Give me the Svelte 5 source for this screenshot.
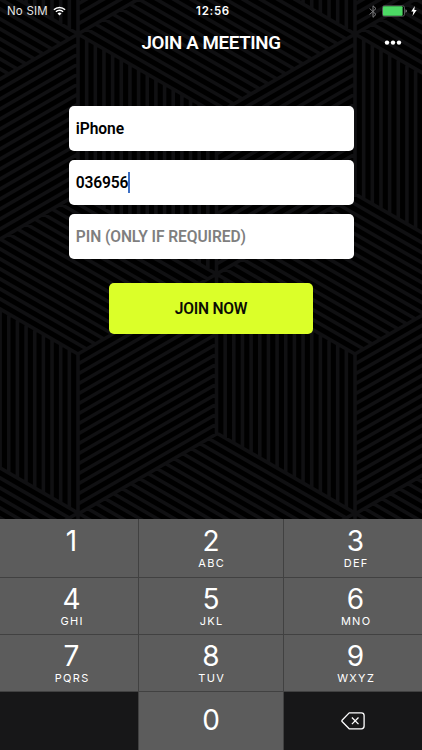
<script lang="ts">
    interface Key {
        digit: string;
        letters?: string;
    }

    let name = $state('iPhone');
    let meetingId = $state('036956');
    let pin = $state('');

    const keys: Key[] = [
        { digit: '1' },
        { digit: '2', letters: 'ABC' },
        { digit: '3', letters: 'DEF' },
        { digit: '4', letters: 'GHI' },
        { digit: '5', letters: 'JKL' },
        { digit: '6', letters: 'MNO' },
        { digit: '7', letters: 'PQRS' },
        { digit: '8', letters: 'TUV' },
        { digit: '9', letters: 'WXYZ' }
    ];

    // striped rhombus backdrop: every hub owns three rhombi
    const W = 138.5;
    const H = 80;
    const STRIPES = 16;
    const hubs = [
        [78, -446], [355, -446],
        [-60.5, -206], [216.5, -206], [493.5, -206],
        [-199, 34], [78, 34], [355, 34],
        [-60.5, 274], [216.5, 274], [493.5, 274],
        [-199, 513], [78, 513], [355, 513], [632, 513]
    ];

    // [stripe direction, step direction]
    const rhombi = [
        [[0, 2 * H], [W, H]],
        [[W, H], [W, -H]],
        [[-W, H], [0, 2 * H]]
    ];

    function buildPath() {
        let d = '';
        for (const [x, y] of hubs) {
            for (const [dir, step] of rhombi) {
                for (let i = 0; i <= STRIPES; i++) {
                    const t = i / STRIPES;
                    d += `M${x + step[0] * t} ${y + step[1] * t}l${dir[0]} ${dir[1]}`;
                }
            }
        }
        return d;
    }

    const stripes = buildPath();

    function press(digit: string) {
        meetingId += digit;
    }

    function erase() {
        meetingId = meetingId.slice(0, -1);
    }
</script>

<div class="screen">
    <svg class="backdrop" viewBox="0 0 422 520" aria-hidden="true">
        <path d={stripes} />
    </svg>

    <div class="status-bar">
        <div class="carrier">
            <span>No SIM</span>
            <svg width="13" height="10" viewBox="0 0 13 10">
                <path d="M0.9 3.7a8 8 0 0 1 11.2 0M2.9 5.8a5.1 5.1 0 0 1 7.2 0" fill="none" stroke="#fff" stroke-width="1.5" />
                <path d="M6.5 9.6L4.5 7.5a2.8 2.8 0 0 1 4 0z" fill="#fff" />
            </svg>
        </div>
        <div class="clock">12:56</div>
        <div class="indicators">
            <svg width="8" height="13" viewBox="0 0 8 13">
                <path d="M0.6 3.5l6.4 5.9-3 2.9V0.8l3 2.8-6.4 5.8" fill="none" stroke="#7d7d7f" stroke-width="1" />
            </svg>
            <svg width="26" height="12" viewBox="0 0 26 12">
                <rect x="0.5" y="0.8" width="22" height="10.4" rx="1.8" fill="#000" stroke="#77777a" stroke-width="0.7" />
                <rect x="1" y="1.3" width="19.6" height="9.4" rx="1" fill="#4cd964" />
                <path d="M23.6 4.2a2 2 0 0 1 0 3.6z" fill="#a5a5a7" />
            </svg>
            <svg width="6" height="10" viewBox="0 0 6 10">
                <path d="M3.8 0L0.2 5.6h2.2L1.5 10 5.7 4.1H3.3z" fill="#fff" />
            </svg>
        </div>
    </div>

    <header>
        <h1>JOIN A MEETING</h1>
        <button class="more" aria-label="More">
            <svg width="18" height="6" viewBox="0 0 18 6" fill="#fff">
                <circle cx="3" cy="2.6" r="2.2" />
                <circle cx="9" cy="2.6" r="2.2" />
                <circle cx="15" cy="2.6" r="2.2" />
            </svg>
        </button>
    </header>

    <form onsubmit={(e) => e.preventDefault()}>
        <input class="field" bind:value={name} aria-label="Name" />
        <div class="field" role="textbox" tabindex="0">
            <span class="value">{meetingId}</span><span class="caret"></span>
        </div>
        <input class="field" bind:value={pin} placeholder="PIN (ONLY IF REQUIRED)" />
        <button class="join" type="submit">JOIN NOW</button>
    </form>

    <div class="keypad">
        {#each keys as key}
            <button class="key" onclick={() => press(key.digit)}>
                <span class="digit">{key.digit}</span>
                {#if key.letters}
                    <span class="letters">{key.letters}</span>
                {/if}
            </button>
        {/each}
        <div class="key blank"></div>
        <button class="key zero" onclick={() => press('0')}>
            <span class="digit">0</span>
        </button>
        <button class="key blank" aria-label="Delete" onclick={erase}>
            <svg width="24" height="18" viewBox="0 0 24 18" fill="none" stroke="#fff" stroke-width="1.3">
                <path d="M8.2 0.9h12.2a2.7 2.7 0 0 1 2.7 2.7v10.5a2.7 2.7 0 0 1-2.7 2.7H8.2L1.3 9.8a1.3 1.3 0 0 1 0-1.8z" stroke-linejoin="round" />
                <path d="M10.9 5.5l6.6 6.6M17.5 5.5l-6.6 6.6" />
            </svg>
        </button>
    </div>
</div>

<style>
    :global(body) {
        background: #000;
    }

    .screen {
        position: relative;
        display: flex;
        flex-direction: column;
        width: 422px;
        height: 750px;
        overflow: hidden;
        background: #000;
        color: #fff;
        font-family: Roboto, "Liberation Sans", sans-serif;
    }

    .backdrop {
        position: absolute;
        top: 0;
        left: 0;
        width: 422px;
        height: 520px;
    }

    .backdrop path {
        fill: none;
        stroke: #101012;
        stroke-width: 3.6;
    }

    .status-bar,
    header,
    form,
    .keypad {
        position: relative;
    }

    button {
        margin: 0;
        padding: 0;
        border: 0;
        background: none;
        color: inherit;
        font: inherit;
    }

    .status-bar {
        display: grid;
        grid-template-columns: 1fr auto 1fr;
        align-items: center;
        height: 22px;
        padding: 0 5px 0 7px;
        font-family: Inter, "Liberation Sans", sans-serif;
        font-size: 11.5px;
    }

    .carrier,
    .indicators {
        display: flex;
        align-items: center;
    }

    .carrier {
        gap: 5px;
        color: #e4e4e4;
        letter-spacing: 0.2px;
    }

    .clock {
        padding-left: 2px;
        font-weight: 600;
        letter-spacing: 0.7px;
    }

    .indicators {
        justify-content: flex-end;
        gap: 3px;
    }

    .indicators svg:first-child {
        margin-right: 2px;
    }

    header {
        display: grid;
        grid-template-columns: 1fr auto 1fr;
        align-items: center;
        height: 42px;
        padding: 0 20px;
    }

    h1 {
        grid-column: 2;
        margin: 0;
        font-size: 18.7px;
        font-weight: 600;
        line-height: 42px;
        letter-spacing: -0.35px;
    }

    .more {
        display: flex;
        justify-self: end;
    }

    form {
        display: flex;
        flex-direction: column;
        gap: 9px;
        width: 285px;
        height: 413px;
        margin: 42px 0 0 68.5px;
    }

    .field {
        box-sizing: border-box;
        display: flex;
        align-items: center;
        width: 100%;
        height: 45px;
        flex: none;
        padding: 1px 7.3px 0;
        border: 0;
        border-radius: 5px;
        outline: none;
        background: #fff;
        color: #000;
        font-family: inherit;
        font-size: 15.6px;
        font-weight: 600;
        letter-spacing: -0.08px;
    }

    .value {
        letter-spacing: -0.15px;
    }

    .field::placeholder {
        color: #7f7f7f;
        opacity: 1;
    }

    .caret {
        width: 1.5px;
        height: 21px;
        margin-top: -1px;
        background: #3d6fc4;
    }

    .join {
        align-self: center;
        width: 204px;
        height: 51px;
        margin-top: 15px;
        border-radius: 5px;
        background: #dbff29;
        color: #0b0c05;
        font-size: 15.6px;
        font-weight: 600;
        letter-spacing: -0.25px;
    }

    .keypad {
        display: grid;
        grid-template-columns: 138px 144px 138px;
        grid-template-rows: 57.5px 56px 56.3px 58px;
        gap: 1px;
        background: #414141;
        font-family: Inter, "Liberation Sans", sans-serif;
    }

    .key {
        display: flex;
        flex-direction: column;
        align-items: center;
        padding-top: 5.2px;
        background: #5c5c5c;
    }

    .key:nth-child(-n + 3) {
        padding-top: 6px;
    }

    .key:nth-child(3n + 1),
    .key:nth-child(3n) {
        padding-left: 5px;
    }

    .digit {
        height: 33px;
        font-size: 28px;
        font-weight: 400;
        line-height: 33px;
    }

    .letters {
        padding-left: 1.3px;
        font-size: 11px;
        line-height: 11px;
        letter-spacing: 1.3px;
    }

    .key.zero {
        padding-top: 12px;
    }

    .key.blank {
        justify-content: center;
        padding: 0 1px 0 0;
        background: #171718;
    }
</style>
